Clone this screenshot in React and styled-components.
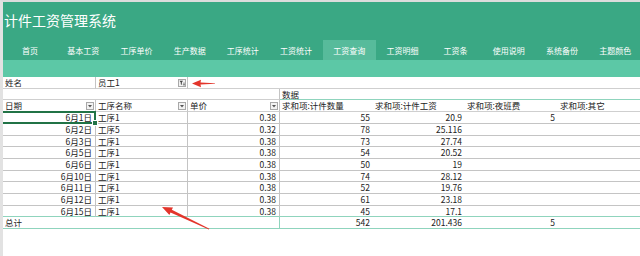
import React from "react";
import styled, { createGlobalStyle } from "styled-components";

const GlobalStyle = createGlobalStyle`
  html, body { margin: 0; padding: 0; background: #fff; }
  body { font-family: "Noto Sans CJK SC", "Noto Sans", sans-serif; }
`;

const Page = styled.div`
  position: relative;
  width: 640px;
  height: 256px;
  overflow: hidden;
  box-sizing: border-box;
  border-left: 3px solid #e2e2e2;
  border-top: 2px solid #dcdcdc;
`;

const Header = styled.header`
  background: #3aa884;
  color: #fff;
`;

const Title = styled.h1`
  margin: 0;
  height: 38px;
  box-sizing: border-box;
  padding: 0 0 2px 1px;
  display: flex;
  align-items: center;
  font-size: 14px;
  font-weight: normal;
`;

const Nav = styled.nav`
  display: flex;
  height: 20px;
  padding-left: 0.5px;
`;

const Tab = styled.div`
  flex: 0 0 53.2px;
  display: flex;
  align-items: center;
  justify-content: center;
  font-size: 8px;
  white-space: nowrap;
  background: ${(p) => (p.$active ? "#57bb9b" : "transparent")};
`;

const Band = styled.div`
  height: 17px;
  background: #5cc8a6;
`;

const Sheet = styled.div`
  display: grid;
  grid-template-columns: 93px 92px 92px 93px 92px 93px 1fr;
  font-size: 8.5px;
  color: #222;
`;

const Cell = styled.div`
  position: relative;
  height: ${(p) => p.$h}px;
  box-sizing: border-box;
  display: flex;
  align-items: center;
  justify-content: ${(p) => (p.$right ? "flex-end" : "flex-start")};
  padding: 0 ${(p) => (p.$btn ? 1 : 3)}px 0 2px;
  grid-column: span ${(p) => p.$span || 1};
  border-bottom: 1px solid ${(p) => p.$bottom || "#cfcfcf"};
  border-right: ${(p) => (p.$divider ? `1px solid ${p.$divider}` : "none")};
  white-space: nowrap;
  line-height: 1;

  ${(p) =>
    p.$selected &&
    `
    &::after {
      content: "";
      position: absolute;
      left: -2px; top: -1px; right: -1px; bottom: -1px;
      border: 2px solid #217346;
    }
    &::before {
      content: "";
      position: absolute;
      right: -3px; bottom: -3px;
      width: 4px; height: 4px;
      background: #217346;
      border: 1px solid #fff;
      z-index: 2;
    }
  `}
`;

const DropBtn = styled.span`
  margin-left: auto;
  width: 8px;
  height: 8px;
  box-sizing: border-box;
  border: 1px solid #a8a8a8;
  background: #f2f2f2;
  display: flex;
  align-items: center;
  justify-content: center;
`;

const Overlay = styled.svg`
  position: absolute;
  left: -3px;
  top: -2px;
  pointer-events: none;
`;

const tabs = ["首页", "基本工资", "工序单价", "生产数据", "工序统计", "工资统计", "工资查询", "工资明细", "工资条", "使用说明", "系统备份", "主题颜色"];

const rows = [
  ["6月1日", "工序1", "0.38", "55", "20.9", "5"],
  ["6月2日", "工序5", "0.32", "78", "25.116", ""],
  ["6月3日", "工序1", "0.38", "73", "27.74", ""],
  ["6月5日", "工序1", "0.38", "54", "20.52", ""],
  ["6月6日", "工序1", "0.38", "50", "19", ""],
  ["6月10日", "工序1", "0.38", "74", "28.12", ""],
  ["6月11日", "工序1", "0.38", "52", "19.76", ""],
  ["6月12日", "工序1", "0.38", "61", "23.18", ""],
  ["6月15日", "工序1", "0.38", "45", "17.1", ""],
];

const GRID = "#c4c4c4";
const TEAL = "#8fd4bd";

const Arrow = () => (
  <svg width="6" height="6" viewBox="0 0 6 6">
    <path d="M1 2 L5 2 L3 4.5 Z" fill="#555" />
  </svg>
);

const Funnel = () => (
  <svg width="6" height="6" viewBox="0 0 6 6">
    <path d="M0.5 0.8 H4 L2.8 2.6 V5 L1.8 4.3 V2.6 Z" fill="#444" />
    <path d="M5 2.5 V5.2 M4.2 4.4 L5 5.3 L5.8 4.4" stroke="#444" strokeWidth="0.7" fill="none" />
  </svg>
);

const App = () => {
  return (
    <Page>
      <GlobalStyle />
      <Header>
        <Title>计件工资管理系统</Title>
        <Nav>
          {tabs.map((t) => (
            <Tab key={t} $active={t === "工资查询"}>{t}</Tab>
          ))}
        </Nav>
      </Header>
      <Band />
      <Sheet>
        {/* page filter */}
        <Cell $h={12} $divider={GRID}>姓名</Cell>
        <Cell $h={12} $divider={GRID} $btn>
          员工1
          <DropBtn><Funnel /></DropBtn>
        </Cell>
        <Cell $h={12} />
        <Cell $h={12} $span={4} />

        {/* data caption */}
        <Cell $h={11} />
        <Cell $h={11} />
        <Cell $h={11} $divider={GRID} />
        <Cell $h={11} $bottom={TEAL}>数据</Cell>
        <Cell $h={11} $bottom={TEAL} $span={3} />

        {/* header */}
        <Cell $h={12} $divider={GRID} $btn>日期<DropBtn><Arrow /></DropBtn></Cell>
        <Cell $h={12} $divider={GRID} $btn>工序名称<DropBtn><Arrow /></DropBtn></Cell>
        <Cell $h={12} $divider={GRID} $btn>单价<DropBtn><Arrow /></DropBtn></Cell>
        <Cell $h={12}>求和项:计件数量</Cell>
        <Cell $h={12}>求和项:计件工资</Cell>
        <Cell $h={12}>求和项:夜班费</Cell>
        <Cell $h={12}>求和项:其它</Cell>

        {rows.map((r, i) => {
          const h = [12, 12, 11][i % 3];
          const last = i === rows.length - 1;
          const b = last ? TEAL : GRID;
          return (
            <React.Fragment key={r[0]}>
              <Cell $h={h} $right $divider={GRID} $bottom={b} $selected={i === 0}>{r[0]}</Cell>
              <Cell $h={h} $divider={GRID} $bottom={b}>{r[1]}</Cell>
              <Cell $h={h} $right $divider={GRID} $bottom={b}>{r[2]}</Cell>
              <Cell $h={h} $right $bottom={b}>{r[3]}</Cell>
              <Cell $h={h} $right $bottom={b}>{r[4]}</Cell>
              <Cell $h={h} $right $bottom={b}>{r[5]}</Cell>
              <Cell $h={h} $bottom={b} />
            </React.Fragment>
          );
        })}

        {/* total */}
        <Cell $h={12} $span={3} $divider={TEAL} $bottom={TEAL}>总计</Cell>
        <Cell $h={12} $right $bottom={TEAL}>542</Cell>
        <Cell $h={12} $right $bottom={TEAL}>201.436</Cell>
        <Cell $h={12} $right $bottom={TEAL}>5</Cell>
        <Cell $h={12} $bottom={TEAL} />
      </Sheet>

      <Overlay width="640" height="256" viewBox="0 0 640 256">
        <polygon points="192,83.5 201,79.8 200.5,82.6 215,83.2 215,83.8 200.5,84.4 201,87.2" fill="#e3352b" />
        <polygon points="162,207 173,207.4 171.8,209.8 209.4,228.7 208.8,229.4 170.5,212.4 169.4,215 " fill="#e3352b" />
      </Overlay>
    </Page>
  );
};

export default App;
